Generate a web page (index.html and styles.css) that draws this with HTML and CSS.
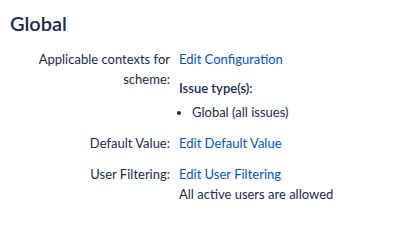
FILE: index.html
```html
<!DOCTYPE html>
<html lang="en">
<head>
  <meta charset="UTF-8" />
  <title>Global context</title>
  <link rel="stylesheet" href="styles.css">
</head>
<body>
  <h2 class="context-title">Global</h2>

  <!-- scheme details: label on the left, values on the right -->
  <dl class="scheme-details">
    <dt>Applicable contexts for scheme:</dt>
    <dd>
      <a href="#">Edit Configuration</a>
      <h4 class="sub-heading">Issue type(s):</h4>
      <ul class="issue-types">
        <li>Global (all issues)</li>
      </ul>
    </dd>

    <dt>Default Value:</dt>
    <dd><a href="#">Edit Default Value</a></dd>

    <dt>User Filtering:</dt>
    <dd>
      <a href="#">Edit User Filtering</a>
      <div>All active users are allowed</div>
    </dd>
  </dl>
</body>
</html>
```

FILE: styles.css
```css
body {
  font-family: Lato, "Open Sans", sans-serif;
  font-size: 13px;
  line-height: 20px;
  color: #172b4d;
  margin: 0;
  padding: 10px;
}

.context-title {
  font-size: 20px;
  font-weight: 600;
  line-height: 24px;
  margin: 1px 0 14px;
}

.scheme-details {
  display: grid;
  grid-template-columns: 160px 1fr;
  column-gap: 9px;
  row-gap: 11px;
  margin: 0;
}

.scheme-details dt {
  text-align: right;
  width: 140px;
  justify-self: end;
}

.scheme-details dd {
  margin: 0;
}

.scheme-details a {
  color: #0052cc;
  text-decoration: none;
}

.sub-heading {
  font-size: 13px;
  font-weight: 600;
  margin: 9px 0 4px;
}

.issue-types {
  margin: 0;
  padding-left: 13px;
}
```
